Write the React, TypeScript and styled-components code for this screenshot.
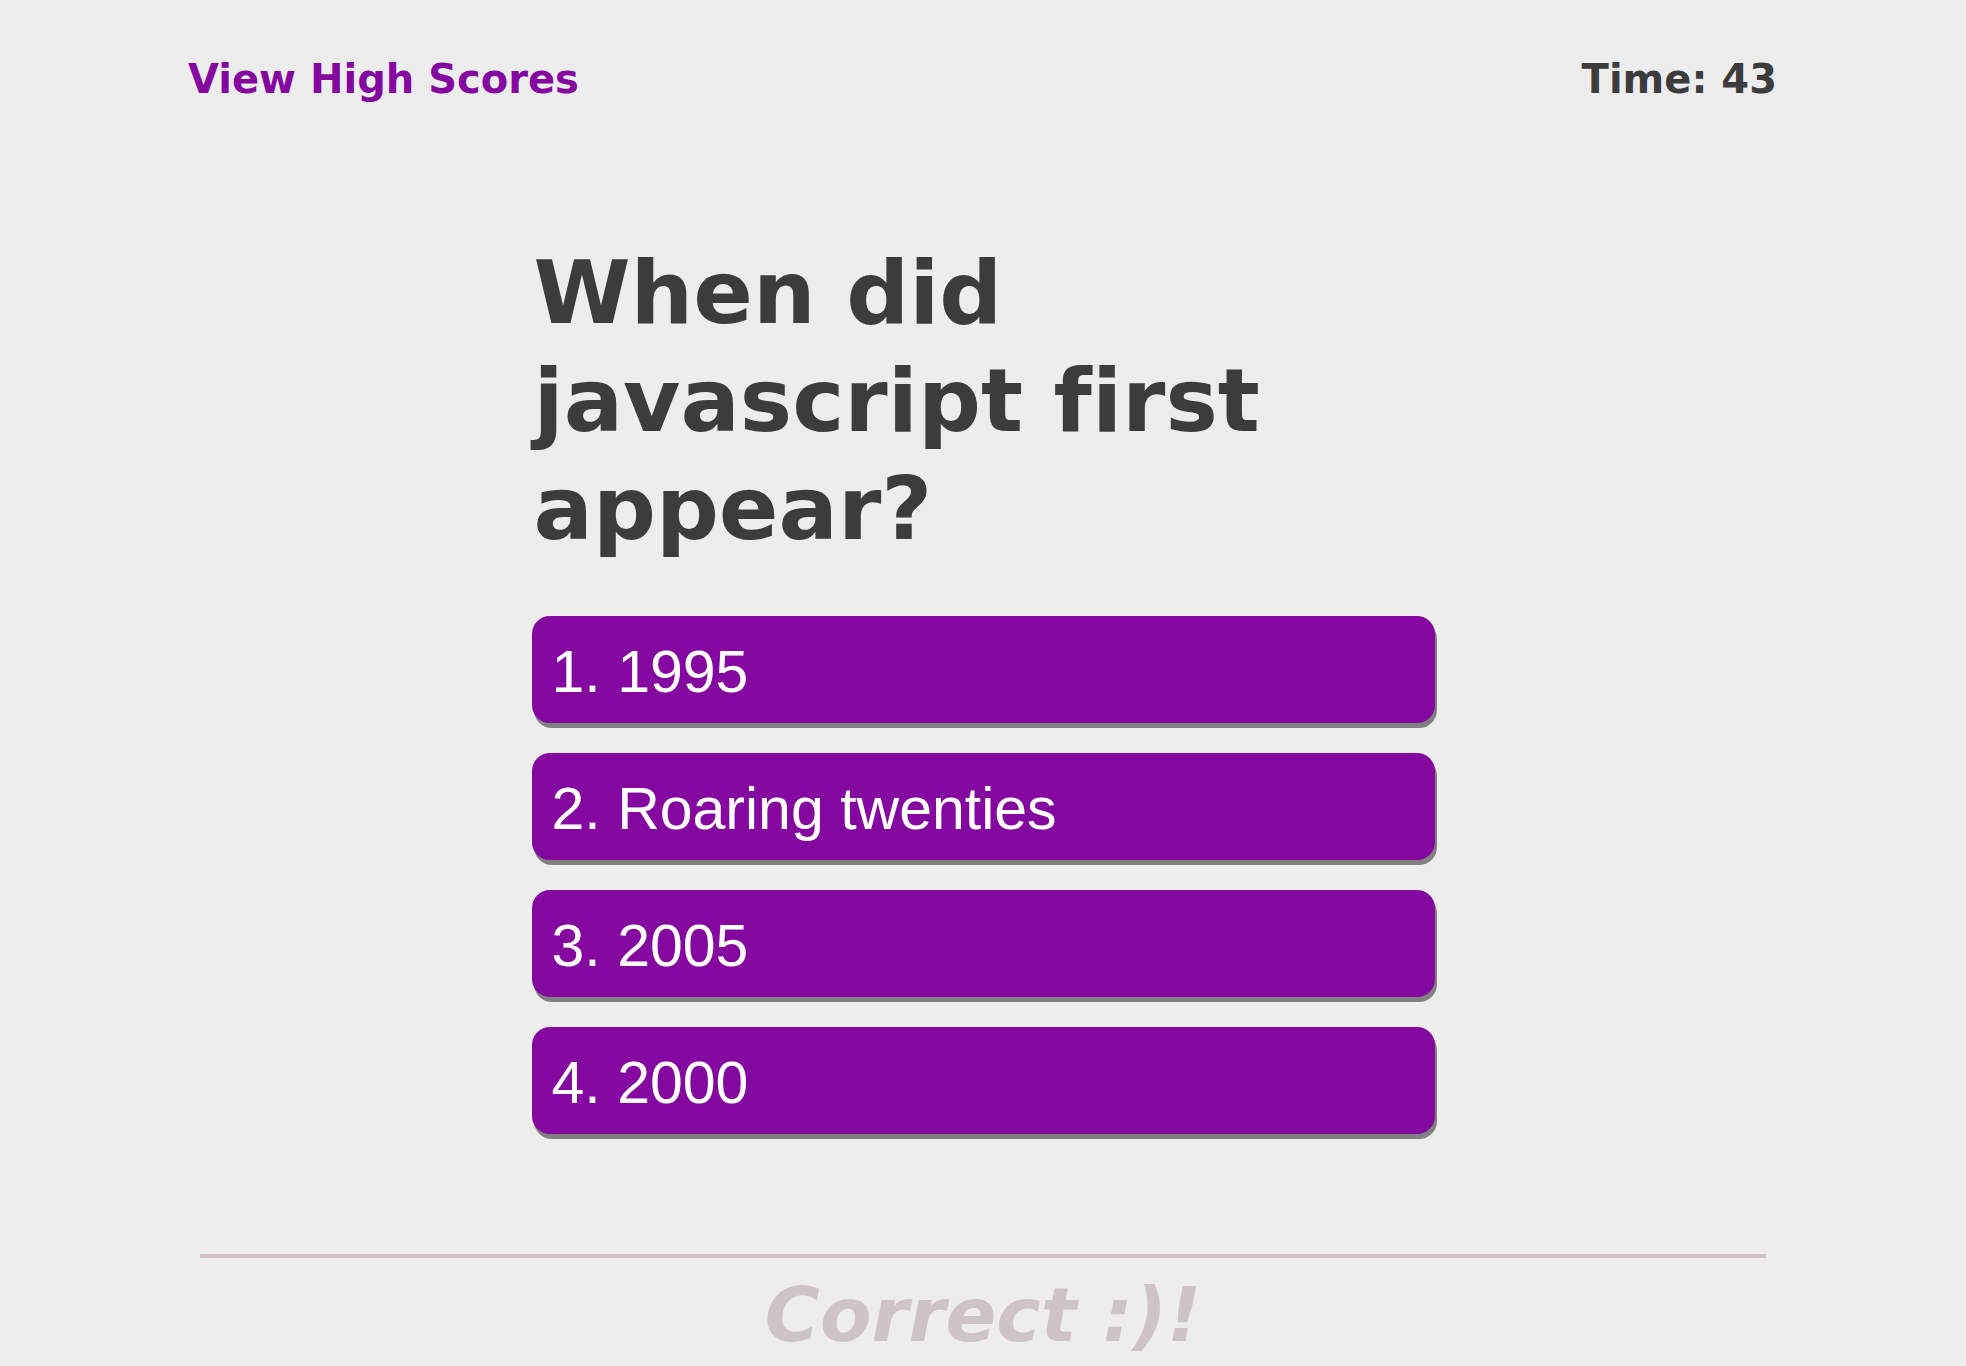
import React from "react";
import styled, { createGlobalStyle } from "styled-components";

const GlobalStyle = createGlobalStyle`
  html, body {
    margin: 0;
    padding: 0;
    background: #ededed;
  }
  body {
    font-family: "DejaVu Sans", Verdana, sans-serif;
    overflow: hidden;
  }
`;

const Page = styled.div`
  min-height: 1366px;
  display: flex;
  flex-direction: column;
  background: #ededed;
`;

const Header = styled.header`
  display: flex;
  justify-content: space-between;
  align-items: baseline;
  padding: 56px 189px 0 188px;
  font-family: "DejaVu Sans", Verdana, sans-serif;
  font-weight: bold;
  font-size: 40px;
`;

const HighScoresLink = styled.a`
  color: #84089f;
  text-decoration: none;
  cursor: pointer;
`;

const Timer = styled.div`
  color: #3c3c3c;
`;

const Quiz = styled.main`
  width: 903px;
  margin: 0 auto;
  padding-top: 137px;
  display: flex;
  flex-direction: column;
`;

const Question = styled.h1`
  margin: 0 0 53px;
  padding: 0 0 0 2px;
  font-family: "DejaVu Sans", Verdana, sans-serif;
  font-weight: bold;
  font-size: 88px;
  line-height: 108px;
  font-variant-ligatures: none;
  color: #3c3c3c;
`;

const Choices = styled.div`
  display: flex;
  flex-direction: column;
  gap: 30px;
`;

const Choice = styled.button`
  height: 107px;
  border: none;
  border-radius: 18px;
  background: #84089f;
  box-shadow: 2px 5px 0 #808080;
  color: #ffffff;
  font-family: "Liberation Sans", Arial, sans-serif;
  font-size: 59px;
  text-align: left;
  padding: 4px 20px 0;
  cursor: pointer;
`;

const Divider = styled.hr`
  margin: 120px 200px 0 200px;
  border: none;
  height: 4px;
  background: #cec4c6;
`;

const Feedback = styled.div`
  margin-top: 13px;
  text-align: center;
  font-family: "DejaVu Sans", Verdana, sans-serif;
  font-weight: bold;
  font-style: italic;
  font-size: 75px;
  color: #cec4c6;
`;

const choices = ["1995", "Roaring twenties", "2005", "2000"];

export default function App() {
  return (
    <Page>
      <GlobalStyle />
      <Header>
        <HighScoresLink>View High Scores</HighScoresLink>
        <Timer>Time: 43</Timer>
      </Header>
      <Quiz>
        <Question>When did javascript first appear?</Question>
        <Choices>
          {choices.map((c, i) => (
            <Choice key={c}>
              {i + 1}. {c}
            </Choice>
          ))}
        </Choices>
      </Quiz>
      <Divider />
      <Feedback>Correct :)!</Feedback>
    </Page>
  );
}
